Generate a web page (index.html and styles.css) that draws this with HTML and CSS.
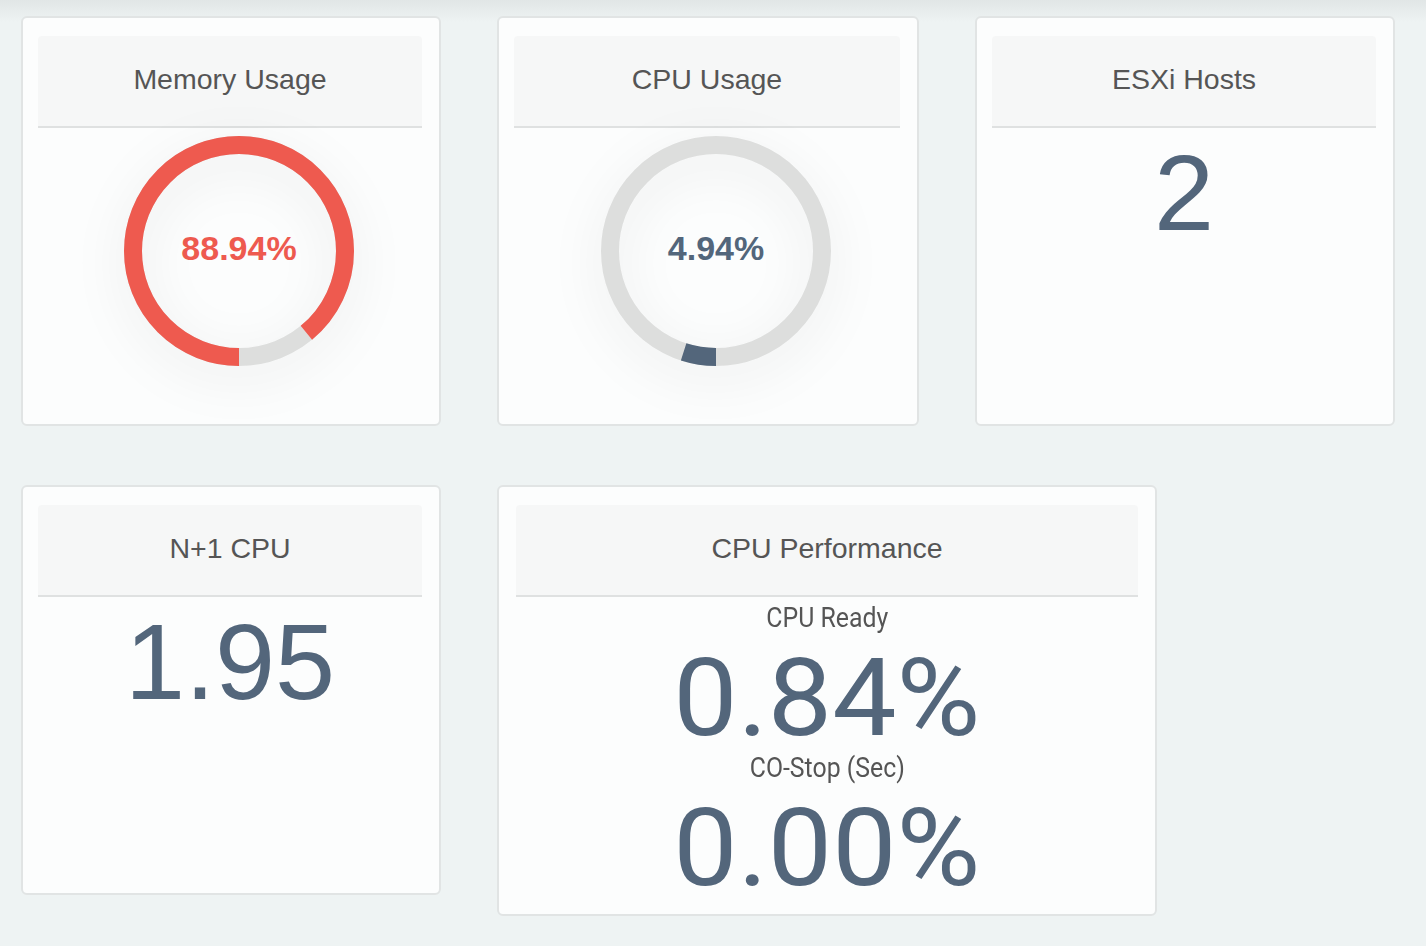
FILE: index.html
```html
<!DOCTYPE html>
<html lang="en">
<head>
<meta charset="utf-8">
<title>Cluster Dashboard</title>
<link rel="stylesheet" href="styles.css">
</head>
<body>
<main class="dash">
  <div class="row">
    <section class="card">
      <header class="card-head">Memory Usage</header>
      <div class="donut-body">
        <div class="donut">
          <svg class="ring" viewBox="0 0 230 230" width="230" height="230">
            <circle cx="115" cy="115" r="106" fill="none" stroke="#dddedd" stroke-width="18"/>
            <circle cx="115" cy="115" r="106" fill="none" stroke="#ee5a4f" stroke-width="18" stroke-dasharray="592.36 666.02" transform="rotate(90 115 115)"/>
          </svg>
          <span class="donut-label label-red">88.94%</span>
        </div>
      </div>
    </section>
    <section class="card card-mid">
      <header class="card-head">CPU Usage</header>
      <div class="donut-body">
        <div class="donut">
          <svg class="ring" viewBox="0 0 230 230" width="230" height="230">
            <circle cx="115" cy="115" r="106" fill="none" stroke="#dddedd" stroke-width="18"/>
            <circle cx="115" cy="115" r="106" fill="none" stroke="#53667b" stroke-width="18" stroke-dasharray="32.9 666.02" transform="rotate(90 115 115)"/>
          </svg>
          <span class="donut-label label-slate">4.94%</span>
        </div>
      </div>
    </section>
    <section class="card">
      <header class="card-head">ESXi Hosts</header>
      <div class="big">2</div>
    </section>
  </div>
  <div class="row">
    <section class="card">
      <header class="card-head">N+1 CPU</header>
      <div class="big">1.95</div>
    </section>
    <section class="card card-perf">
      <header class="card-head">CPU Performance</header>
      <div class="perf-label first"><span>CPU Ready</span></div>
      <div class="perf-value"><span>0.84%</span></div>
      <div class="perf-label"><span>CO-Stop (Sec)</span></div>
      <div class="perf-value"><span>0.00%</span></div>
    </section>
  </div>
</main>
</body>
</html>
```

FILE: styles.css
```css
html, body {
  margin: 0;
  padding: 0;
}

body {
  min-height: 946px;
  background: #eef3f3 linear-gradient(to bottom, #e1e6e6 0px, #eef3f3 22px) no-repeat;
  font-family: "Liberation Sans", Arial, Helvetica, sans-serif;
}

.dash {
  padding: 16px 0 0 21px;
  display: flex;
  flex-direction: column;
  gap: 59px;
}

.row {
  display: flex;
  gap: 56px;
  align-items: flex-start;
}

.card {
  box-sizing: border-box;
  width: 420px;
  height: 410px;
  background: #fcfdfd;
  border: 2px solid #e1e4e4;
  border-radius: 6px;
  padding: 18px 17px 10px 15px;
}

.card-mid {
  width: 422px;
}

.card-perf {
  width: 660px;
  height: auto;
  padding-left: 17px;
  padding-bottom: 12px;
}

.card-head {
  box-sizing: border-box;
  height: 92px;
  padding-bottom: 4px;
  background: #f6f7f7;
  border-bottom: 2px solid #dfe1e1;
  border-radius: 4px 4px 0 0;
  display: flex;
  align-items: center;
  justify-content: center;
  font-size: 28.5px;
  color: #555555;
}

.donut-body {
  display: flex;
  justify-content: center;
  padding-left: 18px;
  padding-top: 8px;
}

.donut {
  display: grid;
  width: 230px;
  height: 230px;
  place-items: center;
}

.ring {
  grid-area: 1 / 1;
  display: block;
  filter: drop-shadow(0 12px 24px rgba(0, 0, 0, 0.08));
}

.donut-label {
  grid-area: 1 / 1;
  font-size: 34px;
  line-height: 34px;
  font-weight: bold;
  padding-bottom: 7px;
}

.label-red {
  color: #ee5a4f;
}

.label-slate {
  color: #53667b;
}

.big {
  margin-top: 11px;
  font-size: 108px;
  line-height: 108px;
  color: #53667b;
  text-align: center;
}

.perf-label {
  font-family: Roboto, "Liberation Sans", sans-serif;
  font-size: 27px;
  line-height: 32px;
  color: #555555;
  text-align: center;
}

.perf-label span {
  display: inline-block;
  transform: scaleX(0.92);
}

.perf-label.first {
  margin-top: 5px;
}

.perf-value {
  margin-top: 10px;
  font-family: Roboto, "Liberation Sans", sans-serif;
  font-size: 108px;
  line-height: 108px;
  color: #53667b;
  text-align: center;
}

.perf-value span {
  display: inline-block;
  transform: scaleX(1.06);
}
```
